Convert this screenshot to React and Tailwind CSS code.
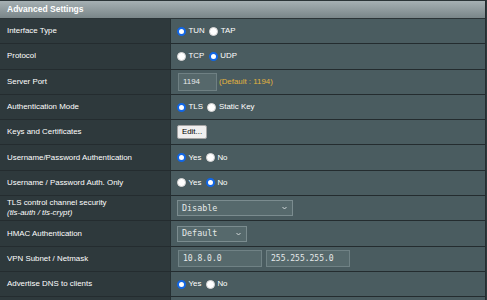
import React from 'react';

const FONT = { fontFamily: '"Liberation Sans", Arial, sans-serif' };

function Radio({ checked, label }) {
  return (
    <span className="flex items-center">
      {checked ? (
        <span className="w-[9px] h-[9px] rounded-full border-[2px] border-[#1166e6] bg-white" />
      ) : (
        <span className="w-[9px] h-[9px] rounded-full bg-white border border-[#d6d6d6]" />
      )}
      <span className="ml-[2.5px] mr-[4.5px] text-[7.9px] text-white leading-none">{label}</span>
    </span>
  );
}

function Chevron() {
  return (
    <svg width="5" height="4" viewBox="0 0 5 4" className="shrink-0">
      <polyline points="0.5,1 2.5,3 4.5,1" fill="none" stroke="#dfe4e5" strokeWidth="0.9" />
    </svg>
  );
}

function Select({ width, value }) {
  return (
    <div className={`${width} h-[16px] border border-[#7b8c8f] bg-[#56696c] flex items-center justify-between pl-[4px] pr-[5px]`}>
      <span className="font-['DejaVu_Sans_Mono',monospace] text-[8.4px] text-[#e6eaea] leading-none">{value}</span>
      <Chevron />
    </div>
  );
}

function TextBox({ value }) {
  return (
    <div className="w-[84px] h-[17px] border border-[#708285] bg-[#56696c] flex items-center pl-[4px]">
      <span className="font-['DejaVu_Sans_Mono',monospace] text-[8px] text-[#e6eaea] leading-none">{value}</span>
    </div>
  );
}

function Row({ label, sub, children }) {
  return (
    <div className="flex h-[25.3px] border-b border-[#242c2f]">
      <div className="w-[171px] shrink-0 bg-[#2e393c] border-r border-[#263033] pl-[7px] flex flex-col justify-center">
        <span className="text-[7.9px] text-white leading-[10px]">{label}</span>
        {sub && <span className="text-[7.9px] text-white italic leading-[10px]">{sub}</span>}
      </div>
      <div className="flex-1 bg-[#4a5c60] pl-[6px] flex items-center">{children}</div>
    </div>
  );
}

export default function App() {
  return (
    <div className="w-[487px] h-[300px] bg-[#2e393c] overflow-hidden" style={FONT}>
      <div className="w-[486px] border-r border-[#262e31]">
        {/* Header */}
        <div className="h-[19px] border-t border-b border-[#2b3437] bg-gradient-to-b from-[#a6b0b3] to-[#7a8689] pl-[7px] flex items-center">
          <span className="text-[8.5px] font-bold text-white">Advanced Settings</span>
        </div>

        <Row label="Interface Type">
          <Radio checked label="TUN" />
          <Radio label="TAP" />
        </Row>
        <Row label="Protocol">
          <Radio label="TCP" />
          <Radio checked label="UDP" />
        </Row>
        <Row label="Server Port">
          <div className="w-[39px] h-[18px] border border-[#6f8083] bg-[#56686b] flex items-center pl-[4px] ml-[1px]">
            <span className="text-[7.9px] text-[#e8ebeb] leading-none">1194</span>
          </div>
          <span className="ml-[2px] text-[7.9px] text-[#e2b33f]">(Default : 1194)</span>
        </Row>
        <Row label="Authentication Mode">
          <Radio checked label="TLS" />
          <Radio label="Static Key" />
        </Row>
        <Row label="Keys and Certificates">
          <button className="w-[30px] h-[14px] bg-[#efefef] border border-[#a4a4a4] rounded-[2px] text-[7.9px] text-black leading-none flex items-center justify-center">
            Edit...
          </button>
        </Row>
        <Row label="Username/Password Authentication">
          <Radio checked label="Yes" />
          <Radio label="No" />
        </Row>
        <Row label="Username / Password Auth. Only">
          <Radio label="Yes" />
          <Radio checked label="No" />
        </Row>
        <Row label="TLS control channel security" sub="(tls-auth / tls-crypt)">
          <Select width="w-[116px]" value="Disable" />
        </Row>
        <Row label="HMAC Authentication">
          <Select width="w-[70px]" value="Default" />
        </Row>
        <Row label="VPN Subnet / Netmask">
          <div className="flex gap-[4px] ml-[1px]">
            <TextBox value="10.8.0.0" />
            <TextBox value="255.255.255.0" />
          </div>
        </Row>
        <Row label="Advertise DNS to clients">
          <Radio checked label="Yes" />
          <Radio label="No" />
        </Row>
        <Row label="" />
      </div>
    </div>
  );
}
